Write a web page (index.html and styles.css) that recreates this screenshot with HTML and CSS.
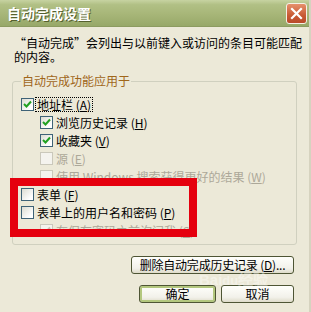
FILE: index.html
```html
<!DOCTYPE html>
<html lang="zh-CN">
<head>
    <meta charset="UTF-8">
    <title>自动完成设置</title>
    <link rel="stylesheet" href="styles.css">
</head>
<body>
    <div class="window">
        <div class="title-bar">
            <span class="title-text">自动完成设置</span>
            <span class="close-btn">
                <svg width="13" height="13" viewBox="0 0 13 13"><path d="M2 2 L11 11 M11 2 L2 11" stroke="#fff" stroke-width="2.2" stroke-linecap="square"/></svg>
            </span>
        </div>
        <div class="content">
            <p class="intro">“自动完成”会列出与以前键入或访问的条目可能匹配</p>
            <p class="intro last">的内容。</p>
            <fieldset class="group">
                <legend>自动完成功能应用于</legend>
                <div class="row">
                    <span class="box"><svg width="11" height="11" viewBox="0 0 11 11"><path d="M2 5 L4.5 7.5 L9 2.5" fill="none" stroke="#21a121" stroke-width="2"/></svg></span>
                    <span class="label focus">地址栏 (<u>A</u>)</span>
                </div>
                <div class="row sub">
                    <span class="box"><svg width="11" height="11" viewBox="0 0 11 11"><path d="M2 5 L4.5 7.5 L9 2.5" fill="none" stroke="#21a121" stroke-width="2"/></svg></span>
                    <span class="label">浏览历史记录 (<u>H</u>)</span>
                </div>
                <div class="row sub">
                    <span class="box"><svg width="11" height="11" viewBox="0 0 11 11"><path d="M2 5 L4.5 7.5 L9 2.5" fill="none" stroke="#21a121" stroke-width="2"/></svg></span>
                    <span class="label">收藏夹 (<u>V</u>)</span>
                </div>
                <div class="row sub disabled">
                    <span class="box"></span>
                    <span class="label">源 (<u>E</u>)</span>
                </div>
                <div class="row sub disabled">
                    <span class="box"></span>
                    <span class="label">使用 Windows 搜索获得更好的结果 (<u>W</u>)</span>
                </div>
                <div class="row">
                    <span class="box"></span>
                    <span class="label">表单 (<u>F</u>)</span>
                </div>
                <div class="row">
                    <span class="box"></span>
                    <span class="label">表单上的用户名和密码 (<u>P</u>)</span>
                </div>
                <div class="row sub disabled">
                    <span class="box"><svg width="11" height="11" viewBox="0 0 11 11"><path d="M2 5 L4.5 7.5 L9 2.5" fill="none" stroke="#c6c4b5" stroke-width="2"/></svg></span>
                    <span class="label">在保存密码之前询问我 (<u>S</u>)</span>
                </div>
            </fieldset>
            <div class="buttons">
                <button class="btn wide">删除自动完成历史记录 (<u>D</u>)...</button>
                <div class="btn-row">
                    <button class="btn default">确定</button>
                    <button class="btn cancel">取消</button>
                </div>
            </div>
        </div>
        <div class="highlight"></div>
        <div class="watermark">Bai<span class="paw">du</span>经验</div>
    </div>
</body>
</html>
```

FILE: styles.css
```css
body {
    margin: 0;
    padding: 0;
    background-color: #ece9d8;
    font-family: 'Noto Sans CJK SC', 'Noto Sans', sans-serif;
    font-size: 12px;
    color: #000;
}

.window {
    width: 311px;
    height: 312px;
    position: relative;
    overflow: hidden;
    background-color: #ece9d8;
    box-sizing: border-box;
    border-right: 2px solid #d6d3bf;
}

.title-bar {
    height: 27px;
    display: flex;
    align-items: center;
    justify-content: space-between;
    padding: 0 2px 0 7px;
    background: linear-gradient(#c7d3a2 0%, #b1c085 18%, #a7b678 55%, #97a869 100%);
    border-bottom: 1px solid #8c9b60;
    box-sizing: border-box;
}

.title-text {
    color: #fff;
    font-size: 14px;
    font-weight: bold;
    text-shadow: 1px 1px 0 #55602f;
}

.close-btn {
    width: 19px;
    height: 19px;
    margin-top: 1px;
    display: flex;
    align-items: center;
    justify-content: center;
    border: 1px solid #f4f0e6;
    border-radius: 3px;
    background: linear-gradient(#e6906c, #c85a34 60%, #b9492a);
}

.content {
    padding: 9px 12px 0 12px;
}

.intro {
    margin: 0 0 0 2px;
    height: 14px;
    line-height: 14px;
    white-space: nowrap;
}

.intro.last {
    margin-bottom: 10px;
}

.group {
    margin: 0;
    padding: 7px 8px 5px 8px;
    border: 1px solid #d0d0bf;
    border-radius: 3px;
}

.group legend {
    padding: 0 1px;
    color: #a0661a;
    line-height: 14px;
}

.row {
    height: 18px;
    display: flex;
    align-items: center;
}

.row.sub {
    padding-left: 19px;
}

.box {
    width: 11px;
    height: 11px;
    border: 1px solid #3e6277;
    background: linear-gradient(135deg, #dcdcd2, #fff 80%);
    display: flex;
    flex-shrink: 0;
}

.disabled .box {
    border-color: #cac8bb;
    background: #f4f3ee;
}

.label {
    margin-left: 2px;
    padding: 0 1px;
    line-height: 13px;
    white-space: nowrap;
}

.disabled .label {
    color: #aca899;
}

.focus {
    outline: 1px dotted #000;
}

.buttons {
    display: flex;
    flex-direction: column;
    align-items: flex-end;
    margin-top: 11px;
    padding-right: 3px;
}

.btn {
    height: 18px;
    padding: 0 3px;
    font-family: 'Noto Sans CJK SC', 'Noto Sans', sans-serif;
    font-size: 12px;
    line-height: 14px;
    color: #000;
    border: 1px solid #4e5534;
    border-radius: 3px;
    background: linear-gradient(#fffffb, #f2f1ea 70%, #dedbc9);
}

.wide {
    width: 163px;
    letter-spacing: -0.2px;
}

.btn-row {
    display: flex;
    gap: 5px;
    margin-top: 11px;
}

.default {
    width: 77px;
    box-shadow: inset 0 0 0 2px #b3c77e;
}

.cancel {
    width: 73px;
}

.highlight {
    position: absolute;
    left: 10px;
    top: 178px;
    width: 187px;
    height: 59px;
    border: 8px solid #e5000e;
    box-sizing: border-box;
}

.watermark {
    position: absolute;
    left: 199px;
    top: 272px;
    color: rgba(255, 255, 255, 0.4);
    font-family: 'Liberation Sans', sans-serif;
    font-size: 15px;
    font-weight: bold;
    line-height: 15px;
    white-space: nowrap;
}

.paw {
    font-size: 13px;
}
```
